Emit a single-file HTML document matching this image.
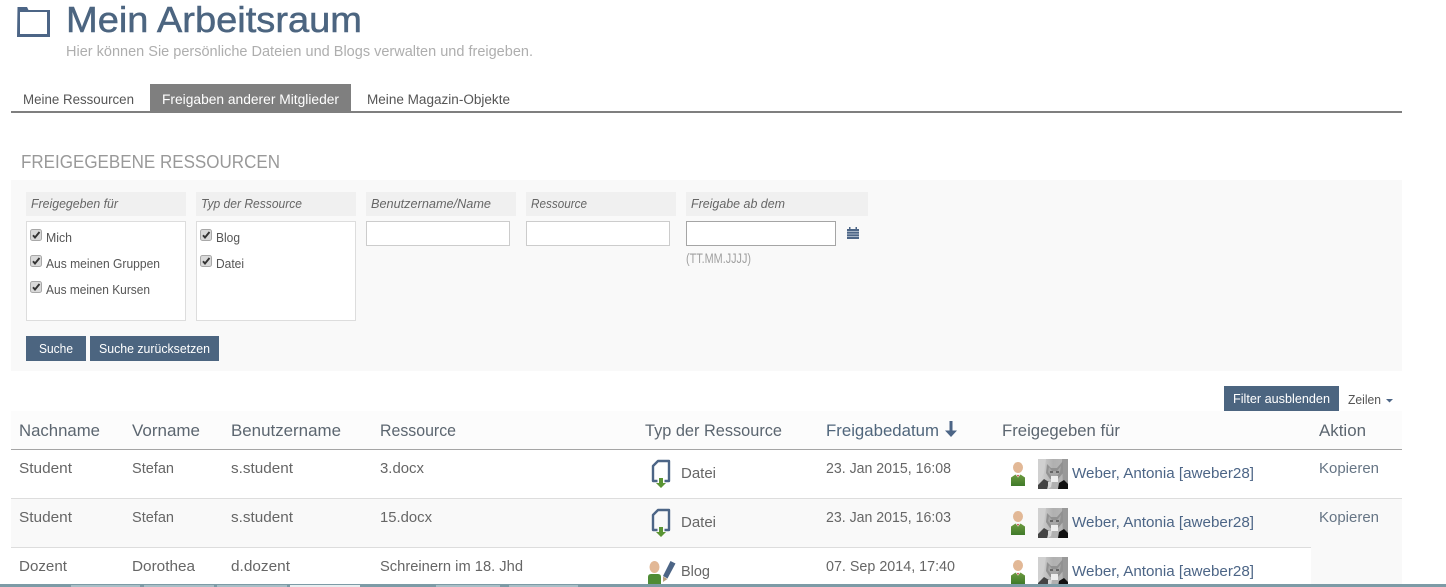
<!DOCTYPE html>
<html lang="de"><head><meta charset="utf-8"><title>Mein Arbeitsraum</title>
<style>
html,body{margin:0;padding:0;background:#fff;width:1446px;height:587px;overflow:hidden}
svg{display:block}
text{font-family:"Liberation Sans",sans-serif;font-size:14.5px;fill:#666;white-space:pre}
.h{font-size:16.5px;fill:#5c6670}
.l{fill:#4c6586}
.k{fill:#667585}
.i{font-size:13px;font-style:italic;fill:#666}
.c{font-size:12.5px;fill:#555}
.b{font-size:12.5px;fill:#fff}
.t{font-size:13.5px;fill:#555}
</style></head><body>
<svg width="1446" height="587" viewBox="0 0 1446 587" xmlns="http://www.w3.org/2000/svg">
<defs>
<linearGradient id="g" x1="0" y1="0" x2="0" y2="1"><stop offset="0" stop-color="#6d9a3f"/><stop offset="1" stop-color="#3f7a2a"/></linearGradient>
<linearGradient id="ph" x1="0" y1="0" x2="1" y2="0"><stop offset="0" stop-color="#d8d8d8"/><stop offset=".5" stop-color="#b0b0b0"/><stop offset="1" stop-color="#b8b8b8"/></linearGradient>
<symbol id="file" viewBox="0 0 24 30" width="24" height="30" overflow="visible">
<path d="M7.500 22H3V7L8 2H19V22H14.500" fill="none" stroke="#4c6586" stroke-width="2.400" stroke-linejoin="round"/>
<path d="M9 19h4v5h3l-5 5-5-5h3z" fill="#5a9433"/>
</symbol>
<symbol id="person" viewBox="0 0 16 24" width="16" height="24" overflow="visible">
<ellipse cx="8" cy="5.500" rx="5" ry="5.500" fill="#e2b896"/>
<path d="M1 24V15.500L5.500 12.500 8 15.500 10.500 12.500 15 15.500V24Z" fill="url(#g)"/>
<path d="M5.800 12.500h4.400L8 15.500Z" fill="#e8e8e8"/>
<path d="M7 13h2L8 15Z" fill="#c33"/>
</symbol>
<symbol id="person2" viewBox="0 0 16 24" width="16" height="24" overflow="visible">
<ellipse cx="7.500" cy="6" rx="5" ry="6" fill="#e2b896"/>
<path d="M1 24V16Q1 13 4 13H11Q14 13 14 16V24Z" fill="#4f8c35"/>
</symbol>
<symbol id="cat" viewBox="0 0 30 30" width="30" height="30">
<rect width="30" height="30" fill="url(#ph)"/>
<path d="M0 0H8L6 14 0 24Z" fill="#d0d0d0"/>
<path d="M24 0H30V30H25Z" fill="#999"/>
<path d="M9 5 13 9H19L25 2 25 14 20 20H12L8 14Z" fill="#919191"/>
<path d="M11 8 14 12H19L23 7 22 13 19 17H13L10 13Z" fill="#a6a6a6"/>
<path d="M12 12h3v2h-3zM18 12h3v2h-3z" fill="#666"/>
<path d="M13 17h7v6h-7z" fill="#eee"/>
<path d="M0 26 6 20 11 23 9 30H0Z" fill="#444"/>
<path d="M21 24 26 21 30 25V30H20Z" fill="#111"/>
<path d="M10 23 14 23 13 28 10 30Z" fill="#d8d8d8"/>
</symbol>
<symbol id="cb" viewBox="0 0 12 12" width="12" height="12">
<rect x=".5" y=".5" width="11" height="11" rx="2" fill="#d9d9d9" stroke="#a8a8a8"/>
<path d="M3 6.200 5 8.500 9.500 3" fill="none" stroke="#333" stroke-width="1.900"/>
</symbol>
</defs>

<!-- header -->
<path d="M17.500 7H27L28.500 10H50V37H17Z" fill="#4c6586"/>
<rect x="20" y="12" width="27" height="22" fill="#fff"/>
<text x="66" y="32" style="font-size:36.500px;fill:#4c6580;stroke:#4c6580;stroke-width:.5px" textLength="296" lengthAdjust="spacingAndGlyphs">Mein Arbeitsraum</text>
<text x="66" y="56" style="fill:#aeaeae" textLength="467" lengthAdjust="spacingAndGlyphs">Hier können Sie persönliche Dateien und Blogs verwalten und freigeben.</text>

<!-- tabs -->
<rect x="150" y="84" width="201" height="27" fill="#7f7f7f"/>
<rect x="11" y="111" width="1391" height="2" fill="#7f7f7f"/>
<text class="t" x="23" y="104" textLength="111" lengthAdjust="spacingAndGlyphs">Meine Ressourcen</text>
<text class="t" x="162" y="104" style="fill:#fff" textLength="177" lengthAdjust="spacingAndGlyphs">Freigaben anderer Mitglieder</text>
<text class="t" x="367" y="104" textLength="143" lengthAdjust="spacingAndGlyphs">Meine Magazin-Objekte</text>

<text x="21" y="168" style="font-size:18px;fill:#999" textLength="259" lengthAdjust="spacingAndGlyphs">FREIGEGEBENE RESSOURCEN</text>

<!-- filter panel -->
<rect x="11" y="180" width="1391" height="191" fill="#f9f9f9"/>
<g fill="#f0f0f0">
<rect x="26" y="192" width="160" height="24"/><rect x="196" y="192" width="160" height="24"/>
<rect x="366" y="192" width="150" height="24"/><rect x="526" y="192" width="150" height="24"/>
<rect x="686" y="192" width="182" height="24"/>
</g>
<text class="i" x="31" y="208" textLength="87" lengthAdjust="spacingAndGlyphs">Freigegeben für</text>
<text class="i" x="201" y="208" textLength="101" lengthAdjust="spacingAndGlyphs">Typ der Ressource</text>
<text class="i" x="371" y="208" textLength="120" lengthAdjust="spacingAndGlyphs">Benutzername/Name</text>
<text class="i" x="531" y="208" textLength="56" lengthAdjust="spacingAndGlyphs">Ressource</text>
<text class="i" x="691" y="208" textLength="94" lengthAdjust="spacingAndGlyphs">Freigabe ab dem</text>

<rect x="26.500" y="221.500" width="159" height="99" fill="#fff" stroke="#ddd"/>
<rect x="196.500" y="221.500" width="159" height="99" fill="#fff" stroke="#ddd"/>
<use href="#cb" x="30" y="229"/><use href="#cb" x="30" y="255"/><use href="#cb" x="30" y="281"/>
<use href="#cb" x="200" y="229"/><use href="#cb" x="200" y="255"/>
<text class="c" x="46" y="242" textLength="26" lengthAdjust="spacingAndGlyphs">Mich</text>
<text class="c" x="46" y="268" textLength="114" lengthAdjust="spacingAndGlyphs">Aus meinen Gruppen</text>
<text class="c" x="46" y="294" textLength="104" lengthAdjust="spacingAndGlyphs">Aus meinen Kursen</text>
<text class="c" x="216" y="242" textLength="24" lengthAdjust="spacingAndGlyphs">Blog</text>
<text class="c" x="216" y="268" textLength="28" lengthAdjust="spacingAndGlyphs">Datei</text>

<rect x="366.500" y="221.500" width="143" height="24" fill="#fff" stroke="#ccc"/>
<rect x="526.500" y="221.500" width="143" height="24" fill="#fff" stroke="#ccc"/>
<rect x="686.500" y="221.500" width="149" height="24" fill="#fff" stroke="#a5a5a5"/>
<path d="M847 229h12v10h-12z" fill="#4c6586"/>
<path d="M849 227h1.500v2H849zM855.500 227h1.500v2h-1.500z" fill="#4c6586"/>
<path d="M847 231.500h12M847 234h12M847 236.500h12" stroke="#c5d0dc" stroke-width=".8"/>
<text x="686" y="263" style="font-size:13.500px;fill:#a0a0a0" textLength="65" lengthAdjust="spacingAndGlyphs">(TT.MM.JJJJ)</text>

<rect x="26" y="336" width="60" height="25" fill="#4c6580"/>
<rect x="90" y="336" width="129" height="25" fill="#4c6580"/>
<text class="b" x="39" y="353" textLength="34" lengthAdjust="spacingAndGlyphs">Suche</text>
<text class="b" x="99" y="353" textLength="111" lengthAdjust="spacingAndGlyphs">Suche zurücksetzen</text>

<rect x="1224" y="386" width="115" height="25" fill="#4c6580"/>
<text class="b" x="1233" y="403" textLength="97" lengthAdjust="spacingAndGlyphs">Filter ausblenden</text>
<text class="c" x="1348" y="404" textLength="33" lengthAdjust="spacingAndGlyphs">Zeilen</text>
<path d="M1386 399h7l-3.500 3.500Z" fill="#4c6586"/>

<!-- table -->
<rect x="11" y="411" width="1391" height="38" fill="#fcfcfc"/>
<rect x="11" y="449" width="1391" height="1" fill="#a5a5a5"/>
<rect x="11" y="498" width="1391" height="1" fill="#ddd"/>
<rect x="11" y="499" width="1391" height="48" fill="#f9f9f9"/>
<rect x="11" y="547" width="1300" height="1" fill="#ddd"/>
<rect x="1311" y="547" width="91" height="37" fill="#f9f9f9"/>

<text class="h" x="19" y="436" textLength="81" lengthAdjust="spacingAndGlyphs">Nachname</text>
<text class="h" x="132" y="436" textLength="68" lengthAdjust="spacingAndGlyphs">Vorname</text>
<text class="h" x="231" y="436" textLength="110" lengthAdjust="spacingAndGlyphs">Benutzername</text>
<text class="h" x="380" y="436" textLength="76" lengthAdjust="spacingAndGlyphs">Ressource</text>
<text class="h" x="645" y="436" textLength="137" lengthAdjust="spacingAndGlyphs">Typ der Ressource</text>
<text class="h" style="fill:#50667c" x="826" y="436" textLength="113" lengthAdjust="spacingAndGlyphs">Freigabedatum</text>
<path d="M949.500 421h3v9.500h4.500l-6 6.500-6-6.500h4.500z" fill="#4c6586"/>
<text class="h" x="1002" y="436" textLength="118" lengthAdjust="spacingAndGlyphs">Freigegeben für</text>
<text class="h" x="1319" y="436" textLength="47" lengthAdjust="spacingAndGlyphs">Aktion</text>

<!-- row 1 -->
<text x="19" y="473" textLength="53" lengthAdjust="spacingAndGlyphs">Student</text>
<text x="132" y="473" textLength="42" lengthAdjust="spacingAndGlyphs">Stefan</text>
<text x="231" y="473" textLength="62" lengthAdjust="spacingAndGlyphs">s.student</text>
<text x="380" y="473" textLength="44" lengthAdjust="spacingAndGlyphs">3.docx</text>
<use href="#file" x="650" y="459"/>
<text x="681" y="478" textLength="35" lengthAdjust="spacingAndGlyphs">Datei</text>
<text x="826" y="473" textLength="125" lengthAdjust="spacingAndGlyphs">23. Jan 2015, 16:08</text>
<use href="#person" x="1010" y="462"/>
<use href="#cat" x="1038" y="459"/>
<text class="l" x="1072" y="478" textLength="182" lengthAdjust="spacingAndGlyphs">Weber, Antonia [aweber28]</text>
<text class="k" x="1319" y="473" textLength="60" lengthAdjust="spacingAndGlyphs">Kopieren</text>

<!-- row 2 -->
<text x="19" y="522" textLength="53" lengthAdjust="spacingAndGlyphs">Student</text>
<text x="132" y="522" textLength="42" lengthAdjust="spacingAndGlyphs">Stefan</text>
<text x="231" y="522" textLength="62" lengthAdjust="spacingAndGlyphs">s.student</text>
<text x="380" y="522" textLength="52" lengthAdjust="spacingAndGlyphs">15.docx</text>
<use href="#file" x="650" y="508"/>
<text x="681" y="527" textLength="35" lengthAdjust="spacingAndGlyphs">Datei</text>
<text x="826" y="522" textLength="125" lengthAdjust="spacingAndGlyphs">23. Jan 2015, 16:03</text>
<use href="#person" x="1010" y="511"/>
<use href="#cat" x="1038" y="508"/>
<text class="l" x="1072" y="527" textLength="182" lengthAdjust="spacingAndGlyphs">Weber, Antonia [aweber28]</text>
<text class="k" x="1319" y="522" textLength="60" lengthAdjust="spacingAndGlyphs">Kopieren</text>

<!-- row 3 -->
<text x="19" y="571" textLength="48" lengthAdjust="spacingAndGlyphs">Dozent</text>
<text x="132" y="571" textLength="63" lengthAdjust="spacingAndGlyphs">Dorothea</text>
<text x="231" y="571" textLength="59" lengthAdjust="spacingAndGlyphs">d.dozent</text>
<text x="380" y="571" textLength="143" lengthAdjust="spacingAndGlyphs">Schreinern im 18. Jhd</text>
<use href="#person2" x="647" y="561"/>
<path d="M670.500 561l5 2.500-8 15-4.500-2.500Z" fill="#4c6586"/>
<path d="M663 576.500l4.500 2.500-4.500 3Z" fill="#b8a080"/>
<text x="681" y="576" textLength="29" lengthAdjust="spacingAndGlyphs">Blog</text>
<text x="826" y="571" textLength="129" lengthAdjust="spacingAndGlyphs">07. Sep 2014, 17:40</text>
<use href="#person" x="1010" y="560"/>
<use href="#cat" x="1038" y="557"/>
<text class="l" x="1072" y="576" textLength="182" lengthAdjust="spacingAndGlyphs">Weber, Antonia [aweber28]</text>

<!-- bottom bar -->
<rect x="0" y="584" width="1446" height="3" fill="#7d9ba6"/>
<g fill="#a9bfc7">
<rect x="71" y="585" width="69" height="2"/><rect x="144" y="585" width="70" height="2"/>
<rect x="217" y="585" width="70" height="2"/><rect x="436" y="585" width="64" height="2"/>
<rect x="509" y="585" width="69" height="2"/>
</g>
<rect x="290" y="585" width="70" height="2" fill="#e8eef0"/>
</svg>
</body></html>
